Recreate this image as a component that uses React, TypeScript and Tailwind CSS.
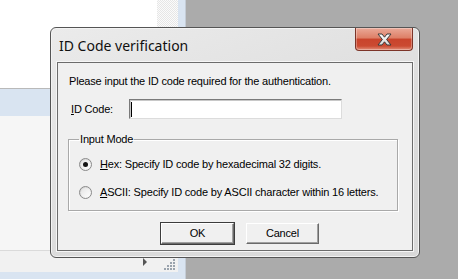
import React from 'react'

/** Win7-style radio button glyph. */
function Radio({ checked }: { checked?: boolean }) {
  return (
    <span className="flex h-[13px] w-[13px] shrink-0 items-center justify-center rounded-full border border-[#8a8a8a] bg-[linear-gradient(135deg,#cfcfcf,#ffffff)]">
      <span className="flex h-[9px] w-[9px] items-center justify-center rounded-full bg-[linear-gradient(135deg,#e4e4e4,#fdfdfd)]">
        {checked && <span className="h-[5px] w-[5px] rounded-full bg-[#141414]" />}
      </span>
    </span>
  )
}

function Button({ label, isDefault }: { label: string; isDefault?: boolean }) {
  return (
    <div
      className={`flex h-[23px] w-[75px] items-center justify-center border ${
        isDefault ? 'border-[#3c3c3c]' : 'border-transparent'
      }`}
    >
      <div className="flex h-full w-full items-center justify-center border border-t-white border-l-white border-r-[#6a6a6a] border-b-[#6a6a6a] bg-[#f0f0f0] shadow-[inset_-1px_-1px_0_#a0a0a0]">
        {label}
      </div>
    </div>
  )
}

export default function App() {
  return (
    <div className="relative flex h-[279px] w-[458px] overflow-hidden bg-[#ababab] font-['Liberation_Sans',Arial,sans-serif]">
      {/* background app behind the dialog */}
      <div className="flex h-full w-[186px]">
        <div className="flex w-[178px] flex-col">
          <div className="flex h-[88px]">
            <div className="w-[157px] bg-white" />
            <div className="flex-1 bg-[repeating-conic-gradient(#e6e6e6_0_25%,#fbfbfb_0_50%)] bg-[length:2px_2px]" />
          </div>
          <div className="h-px bg-[#b9b9b9]" />
          <div className="h-[27px] bg-[#d9e4f1]" />
          <div className="flex-1 bg-[#f6f6f6]" />
          <div className="h-px bg-[#dadada]" />
          <div className="flex h-[21px] items-start bg-[#f1f1f1] pl-[143px] pt-[7px]">
            <span className="h-0 w-0 border-y-[4px] border-l-[4px] border-y-transparent border-l-[#555]" />
            <span className="ml-[17px] grid grid-cols-4 gap-[1px] pt-[1px]">
              {[0, 0, 0, 1, 0, 0, 1, 1, 0, 1, 1, 1, 1, 1, 1, 1].map((v, i) => (
                <span key={i} className={`h-[2px] w-[2px] ${v ? 'bg-[#9aa3ad]' : ''}`} />
              ))}
            </span>
          </div>
          <div className="h-[7px] bg-[#d9e4f1]" />
        </div>
        <div className="flex-1 border-r border-[#c4ccd6] bg-[#d9e4f1]" />
      </div>

      {/* dialog window */}
      <div className="absolute left-[50px] top-[27px] flex h-[231px] w-[370px] flex-col rounded-[6px] border border-[#555555] bg-[linear-gradient(160deg,#ebebeb,#dcdcdc_60%,#d9d9d9)] shadow-[inset_0_0_0_1px_#f3f3f3]">
        <div className="flex h-[34px] items-start justify-between">
          <span className="pl-[8px] pt-[9px] font-['Noto_Sans',sans-serif] text-[14px] leading-[18px] text-[#101010]">
            ID Code verification
          </span>
          <button className="mr-[6px] flex h-[23px] w-[58px] items-center justify-center rounded-b-[4px] border border-t-0 border-[#7c3428] bg-[linear-gradient(#eaa998_0%,#de8068_44%,#c9442c_52%,#cb4a31_82%,#e3907a_100%)] shadow-[inset_0_0_0_1px_rgba(255,255,255,0.3)]">
            <svg width="17" height="13" viewBox="0 0 17 13">
              <defs>
                <linearGradient id="xg" x1="0" y1="0" x2="0" y2="1">
                  <stop offset="0" stopColor="#ffffff" />
                  <stop offset="1" stopColor="#d8d8d8" />
                </linearGradient>
              </defs>
              <path
                d="M2 1H6L8.5 4.2L11 1H15L10.6 6.5L15 12H11L8.5 8.8L6 12H2L6.4 6.5Z"
                fill="url(#xg)"
                stroke="#3a3a3a"
                strokeWidth="1"
                strokeLinejoin="round"
              />
            </svg>
          </button>
        </div>

        {/* client area */}
        <div className="mx-[6px] mb-[6px] flex flex-1 flex-col border border-[#6c6c6c] bg-[#f0f0f0] text-[11px] leading-[13px] tracking-[-0.18px] text-black shadow-[0_0_0_1px_#f6f6f6]">
          <p className="ml-[11px] mt-[12px] whitespace-nowrap">Please input the ID code required for the authentication.</p>

          <div className="ml-[13px] mt-[11px] flex items-center">
            <span className="w-[58px]">
              <span className="underline">I</span>D Code:
            </span>
            <div className="flex h-[20px] w-[213px] items-center border border-t-[#7a7a7a] border-l-[#7a7a7a] border-r-[#dcdcdc] border-b-[#dcdcdc] bg-white pl-[1px] shadow-[inset_1px_1px_0_#c8c8c8]">
              <span className="h-[15px] w-px bg-black" />
            </div>
          </div>

          <fieldset className="ml-[10px] mt-[14px] h-[78px] w-[330px] border border-[#a9a9a9] px-[10px] shadow-[inset_1px_1px_0_#ffffff,1px_1px_0_#ffffff]">
            <legend className="px-[1px]">Input Mode</legend>
            <div className="mt-[12px] flex items-center gap-[8px]">
              <Radio checked />
              <span className="whitespace-nowrap">
                <span className="underline">H</span>ex: Specify ID code by hexadecimal 32 digits.
              </span>
            </div>
            <div className="mt-[15px] flex items-center gap-[8px]">
              <Radio />
              <span className="whitespace-nowrap">
                <span className="underline">A</span>SCII: Specify ID code by ASCII character within 16 letters.
              </span>
            </div>
          </fieldset>

          <div className="ml-[102px] mt-[11px] flex gap-[10px]">
            <Button label="OK" isDefault />
            <Button label="Cancel" />
          </div>
        </div>
      </div>
    </div>
  )
}
